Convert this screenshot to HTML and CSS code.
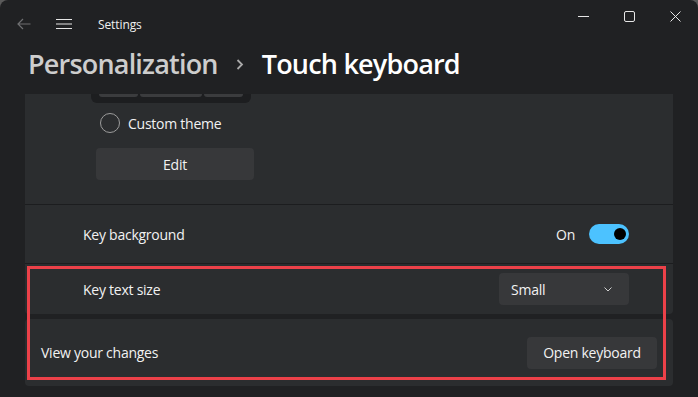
FILE: index.html
```html
<!DOCTYPE html>
<html lang="en">
<head>
<meta charset="utf-8">
<title>Settings</title>
<link rel="stylesheet" href="styles.css">
</head>
<body>
<div class="window">
  <header class="titlebar">
    <div class="tb-left">
      <svg class="icon-back" width="14" height="12" viewBox="0 0 14 12"><path d="M6 1 L1 6 L6 11 M1 6 H13.5" fill="none" stroke="#6e6f71" stroke-width="1.2"/></svg>
      <svg class="icon-menu" width="16" height="12" viewBox="0 0 16 12"><path d="M0 1.5 H16 M0 6 H16 M0 10.5 H16" fill="none" stroke="#e6e6e6" stroke-width="1.1"/></svg>
      <span class="app-title">Settings</span>
    </div>
    <div class="caption">
      <span class="cap-btn"><svg width="11" height="11" viewBox="0 0 11 11"><path d="M0 5.5 H11" stroke="#e6e6e6" stroke-width="1"/></svg></span>
      <span class="cap-btn"><svg width="11" height="11" viewBox="0 0 11 11"><rect x="0.5" y="0.5" width="10" height="10" rx="1.5" fill="none" stroke="#e6e6e6" stroke-width="1"/></svg></span>
      <span class="cap-btn"><svg width="11" height="11" viewBox="0 0 11 11"><path d="M0.5 0.5 L10.5 10.5 M10.5 0.5 L0.5 10.5" stroke="#e6e6e6" stroke-width="1"/></svg></span>
    </div>
  </header>

  <h1 class="breadcrumb">
    <span class="crumb-parent">Personalization</span>
    <svg class="crumb-sep" width="8" height="11" viewBox="0 0 8 11"><path d="M1.5 1 L6 5.5 L1.5 10" fill="none" stroke="#a8a8a8" stroke-width="1.8"/></svg>
    <span class="crumb-current">Touch keyboard</span>
  </h1>

  <main class="content">
    <section class="card card-theme">
      <div class="kb-preview">
        <span class="key key-a"></span>
        <span class="key key-b"></span>
        <span class="key key-c"></span>
      </div>
      <label class="radio-row">
        <span class="radio"></span>
        <span class="label">Custom theme</span>
      </label>
      <button class="btn btn-edit">Edit</button>
    </section>

    <section class="card row row-indent sep">
      <span class="label">Key background</span>
      <div class="toggle-wrap">
        <span class="label">On</span>
        <span class="toggle"><span class="knob"></span></span>
      </div>
    </section>

    <section class="card row row-indent row-size">
      <span class="label">Key text size</span>
      <div class="select">
        <span>Small</span>
        <svg width="8" height="5" viewBox="0 0 8 5"><path d="M0.5 0.5 L4 4 L7.5 0.5" fill="none" stroke="#d0d0d0" stroke-width="1"/></svg>
      </div>
    </section>

    <section class="card row row-view">
      <span class="label">View your changes</span>
      <button class="btn btn-open">Open keyboard</button>
    </section>

    <div class="highlight"></div>
  </main>
</div>
</body>
</html>
```

FILE: styles.css
```css
* { box-sizing: border-box; }

html, body {
  margin: 0;
  padding: 0;
  height: 100%;
}

body {
  background: #5a5a5a;
  font-family: "Open Sans", "Noto Sans", sans-serif;
  color: #f2f2f2;
}

.window {
  width: 698px;
  height: 397px;
  background: #202123;
  border-radius: 8px 8px 0 0;
  overflow: hidden;
  display: flex;
  flex-direction: column;
}

.titlebar {
  height: 48px;
  display: flex;
  justify-content: space-between;
  align-items: flex-start;
  flex-shrink: 0;
}

.tb-left {
  height: 48px;
  display: flex;
  align-items: center;
  padding-left: 17px;
}

.icon-back { margin-right: 25px; }
.icon-menu { margin-right: 26px; }

.app-title {
  font-size: 12px;
  color: #f0f0f0;
  letter-spacing: -0.1px;
}

.caption {
  display: flex;
  height: 32px;
}

.cap-btn {
  width: 46px;
  height: 32px;
  display: flex;
  align-items: center;
  justify-content: center;
}

.breadcrumb {
  margin: 2px 0 16px;
  padding-left: 28px;
  height: 28px;
  display: flex;
  align-items: center;
  font-size: 27px;
  line-height: 28px;
  font-weight: 600;
  letter-spacing: -0.8px;
  white-space: nowrap;
}

.crumb-parent { color: #cdcdcd; }
.crumb-current { color: #ffffff; }
.crumb-sep { margin: 0 18px; flex-shrink: 0; }

.content {
  position: relative;
  flex: 1;
  padding: 0 25px;
  display: flex;
  flex-direction: column;
  overflow: hidden;
}

.card {
  background: #2b2d2f;
  flex-shrink: 0;
}

.label {
  font-size: 14px;
  letter-spacing: -0.25px;
  color: #f2f2f2;
}

/* theme card (scrolled, top clipped) */
.card-theme {
  height: 111px;
  border-bottom: 1px solid #1c1d1f;
  display: flex;
  flex-direction: column;
  align-items: flex-start;
}

.kb-preview {
  margin-left: 66px;
  width: 160px;
  height: 9px;
  background: #1d1e20;
  border-radius: 0 0 6px 6px;
  padding: 0 8px;
  display: flex;
  gap: 2px;
}

.key {
  height: 3px;
  background: #3b3c3e;
  border-radius: 0 0 3px 3px;
}
.key-a { width: 39px; }
.key-b { width: 62px; }
.key-c { width: 39px; }

.radio-row {
  margin-top: 10px;
  margin-left: 75px;
  display: flex;
  align-items: center;
  gap: 8px;
  height: 20px;
}

.radio {
  width: 20px;
  height: 20px;
  border-radius: 50%;
  border: 1.5px solid #9c9c9c;
}

.btn {
  font-family: inherit;
  font-size: 14px;
  letter-spacing: -0.25px;
  color: #f2f2f2;
  background: #37383a;
  border: none;
  border-radius: 4px;
  height: 32px;
  padding: 0;
}

.btn-edit {
  margin-top: 15px;
  margin-left: 71px;
  width: 158px;
}

/* rows */
.row {
  display: flex;
  align-items: center;
  justify-content: space-between;
}

.row-indent {
  padding: 0 44px 0 58px;
}

.sep {
  height: 59px;
  border-bottom: 1px solid #1c1d1f;
}

.toggle-wrap {
  display: flex;
  align-items: center;
  gap: 14px;
}

.toggle {
  position: relative;
  width: 40px;
  height: 20px;
  border-radius: 10px;
  background: #4cc2ff;
}

.knob {
  position: absolute;
  right: 3px;
  top: 4px;
  width: 12px;
  height: 12px;
  border-radius: 50%;
  background: #000;
}

.row-size {
  height: 50px;
  border-radius: 0 0 4px 4px;
}

.select {
  width: 130px;
  height: 32px;
  background: #37383a;
  border-radius: 4px;
  display: flex;
  align-items: center;
  justify-content: space-between;
  padding: 0 17px 0 12px;
  font-size: 14px;
  letter-spacing: -0.25px;
  color: #f2f2f2;
}

.row-view {
  margin-top: 5px;
  height: 67px;
  padding: 0 16px;
  border-radius: 4px;
}

.btn-open {
  width: 130px;
}

.highlight {
  position: absolute;
  left: 27px;
  top: 172px;
  width: 639px;
  height: 114px;
  border: 3px solid #ec4149;
  pointer-events: none;
}
```
